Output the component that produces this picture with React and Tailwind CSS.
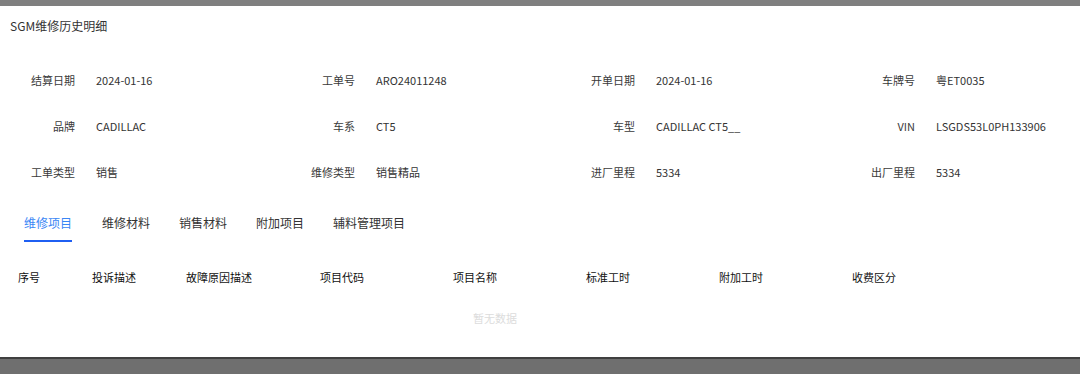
import React from "react";

const font = { fontFamily: '"Noto Sans CJK SC", "Noto Sans", sans-serif' };

const rows = [
  [
    ["结算日期", "2024-01-16"],
    ["工单号", "ARO24011248"],
    ["开单日期", "2024-01-16"],
    ["车牌号", "粤ET0035"],
  ],
  [
    ["品牌", "CADILLAC"],
    ["车系", "CT5"],
    ["车型", "CADILLAC CT5__"],
    ["VIN", "LSGDS53L0PH133906"],
  ],
  [
    ["工单类型", "销售"],
    ["维修类型", "销售精品"],
    ["进厂里程", "5334"],
    ["出厂里程", "5334"],
  ],
];

const tabs = ["维修项目", "维修材料", "销售材料", "附加项目", "辅料管理项目"];

const cols = [
  ["序号", "w-[74px]"],
  ["投诉描述", "w-[94px]"],
  ["故障原因描述", "w-[134px]"],
  ["项目代码", "w-[133px]"],
  ["项目名称", "w-[133px]"],
  ["标准工时", "w-[133px]"],
  ["附加工时", "w-[133px]"],
  ["收费区分", "w-[133px]"],
];

export default function App() {
  return (
    <div className="w-[1080px] h-[374px] flex flex-col bg-[#707070] overflow-hidden" style={font}>
      <div className="h-[6px] shrink-0 bg-[#7f7f7f]" />
      <div className="h-[351px] shrink-0 bg-white flex flex-col overflow-hidden">
        <div className="h-[51px] shrink-0 pt-[12px] pl-[10px] text-[12px] leading-[16px] text-[#333]">
          SGM维修历史明细
        </div>
        {rows.map((row, i) => (
          <div key={i} className="h-[46px] shrink-0 flex items-center">
            {row.map(([label, value], j) => (
              <div key={j} className="w-[280px] shrink-0 flex items-center text-[11px] leading-[16px] text-[#333]">
                <div className="w-[75px] text-right text-[#3a3a3a]">{label}</div>
                <div className="ml-[21px]">{value}</div>
              </div>
            ))}
          </div>
        ))}
        <div className="h-[48px] shrink-0 flex pl-[24px] gap-[29px]">
          {tabs.map((t, i) => (
            <div key={i} className={"flex flex-col items-stretch pt-[19px] " + (i === 0 ? "mr-[1px]" : "")}>
              <div
                className={
                  "text-[12px] leading-[18px] " +
                  (i === 0 ? "text-[#3a86f5]" : "text-[#333]")
                }
              >
                {t}
              </div>
              <div className={"mt-[8px] h-[2px] " + (i === 0 ? "bg-[#1f5ff2]" : "bg-transparent")} />
            </div>
          ))}
        </div>
        <div className="h-[18px] shrink-0" />
        <div className="h-[32px] shrink-0 flex items-center pl-[18px] text-[11px] leading-[16px] text-[#111]">
          {cols.map(([c, w], i) => (
            <div key={i} className={w + " shrink-0"}>
              {c}
            </div>
          ))}
        </div>
        <div className="h-[18px] shrink-0 mt-[16px] pl-[473px] text-[11px] leading-[18px] text-[#dcdcdc]">
          暂无数据
        </div>
      </div>
      <div className="h-[2px] shrink-0 bg-[#404040]" />
      <div className="flex-1 bg-[#6f6f6f]" />
    </div>
  );
}
